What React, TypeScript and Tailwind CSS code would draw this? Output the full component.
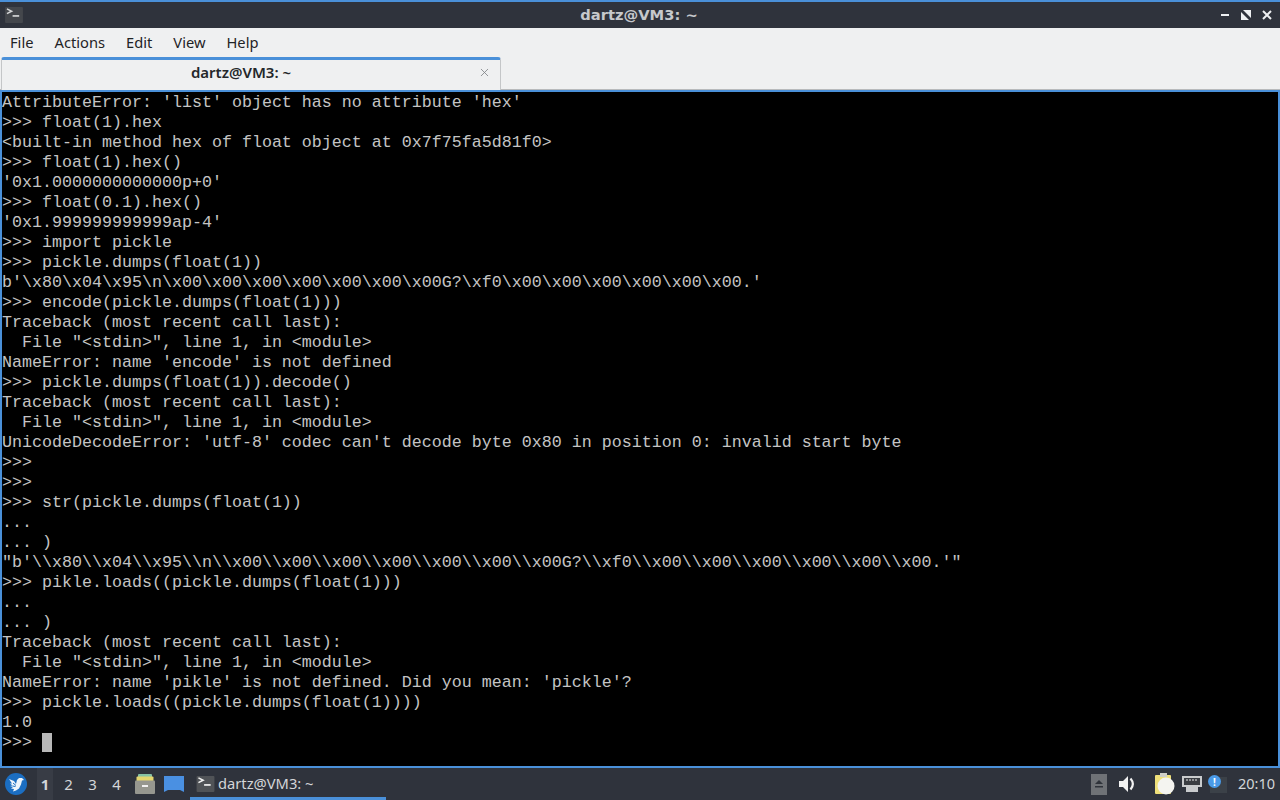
import { X } from "lucide-react";

const LINES = [
  "AttributeError: 'list' object has no attribute 'hex'",
  ">>> float(1).hex",
  "<built-in method hex of float object at 0x7f75fa5d81f0>",
  ">>> float(1).hex()",
  "'0x1.0000000000000p+0'",
  ">>> float(0.1).hex()",
  "'0x1.999999999999ap-4'",
  ">>> import pickle",
  ">>> pickle.dumps(float(1))",
  "b'\\x80\\x04\\x95\\n\\x00\\x00\\x00\\x00\\x00\\x00\\x00G?\\xf0\\x00\\x00\\x00\\x00\\x00\\x00.'",
  ">>> encode(pickle.dumps(float(1)))",
  "Traceback (most recent call last):",
  '  File "<stdin>", line 1, in <module>',
  "NameError: name 'encode' is not defined",
  ">>> pickle.dumps(float(1)).decode()",
  "Traceback (most recent call last):",
  '  File "<stdin>", line 1, in <module>',
  "UnicodeDecodeError: 'utf-8' codec can't decode byte 0x80 in position 0: invalid start byte",
  ">>> ",
  ">>> ",
  ">>> str(pickle.dumps(float(1))",
  "... ",
  "... )",
  "\"b'\\\\x80\\\\x04\\\\x95\\\\n\\\\x00\\\\x00\\\\x00\\\\x00\\\\x00\\\\x00\\\\x00G?\\\\xf0\\\\x00\\\\x00\\\\x00\\\\x00\\\\x00\\\\x00.'\"",
  ">>> pikle.loads((pickle.dumps(float(1)))",
  "... ",
  "... )",
  "Traceback (most recent call last):",
  '  File "<stdin>", line 1, in <module>',
  "NameError: name 'pikle' is not defined. Did you mean: 'pickle'?",
  ">>> pickle.loads((pickle.dumps(float(1))))",
  "1.0",
];

const MENU = ["File", "Actions", "Edit", "View", "Help"];

function TermIcon({ className, bg, fg }: { className: string; bg: string; fg: string }) {
  return (
    <svg viewBox="0 0 19 17" className={className}>
      <rect width="19" height="17" rx="1" fill={bg} />
      <path d="M2 2l5 2.500L2 7" fill="none" stroke={fg} strokeWidth="1.6" />
      <path d="M8 9.500h7" stroke={fg} strokeWidth="1.8" />
    </svg>
  );
}

function Bird() {
  return (
    <svg viewBox="0 0 22 22" className="h-[22px] w-[22px]">
      <circle cx="11" cy="11" r="11" fill="#1b6ec2" />
      <path
        d="M4 6l5 2 2 3 1-4 2-2 3 0 2 2-2 .5-1 4-2 4-3 2-3 1 1-2.500-3-.5 2-1.500-3-1 2.500-.5-2.500-2 2 0z"
        fill="#eef5fb"
      />
      <path d="M8 10l3 2.500M7.500 13l3 .5" stroke="#1b6ec2" strokeWidth="1" />
    </svg>
  );
}

function FilesIcon() {
  return (
    <svg viewBox="0 0 20 20" className="h-[20px] w-[20px]">
      <rect x="3" y="0" width="14" height="4" rx="1" fill="#86c2a4" />
      <rect x="1.500" y="2.500" width="17" height="5" rx="1" fill="#e4d56e" />
      <rect x="0" y="6.500" width="20" height="13.500" rx="1" fill="#96978f" />
      <rect x="7" y="11" width="6" height="2" fill="#f0f0f0" />
    </svg>
  );
}

function DesktopIcon() {
  return (
    <svg viewBox="0 0 20 16" className="h-[16px] w-[20px]">
      <path d="M0 0h20v16l-4-2H4l-4 2z" fill="#4a90e2" />
    </svg>
  );
}

function Tray() {
  return (
    <div className="flex items-center">
      <div className="flex h-[21px] w-[16px] items-center justify-center bg-[#6f7276]">
        <svg viewBox="0 0 10 8" className="h-[8px] w-[10px]">
          <path d="M5 0l4 4H1z M1 6h8v1.500H1z" fill="#2f333a" />
        </svg>
      </div>
      <svg viewBox="0 0 17 16" className="ml-[12px] h-[16px] w-[17px]">
        <path d="M0 5h4l5-5v16l-5-5H0z" fill="#f2f2f2" />
        <path d="M11.500 2.500c3 3.500 3 7.500 0 11" fill="none" stroke="#f2f2f2" strokeWidth="2.200" />
      </svg>
      <svg viewBox="0 0 20 22" className="ml-[19px] h-[22px] w-[20px]">
        <rect x="0" y="2" width="16" height="19" rx="1" fill="#efe07a" />
        <rect x="5" y="0" width="7" height="4" fill="#cfcfc8" />
        <circle cx="11" cy="13" r="8.500" fill="#f4f4f0" />
      </svg>
      <svg viewBox="0 0 20 16" className="ml-[7px] h-[16px] w-[20px]">
        <path d="M0 0h20v11h-4v5H4v-5H0z" fill="#c9cbcd" />
        <rect x="2" y="2" width="16" height="7" fill="#3a3d42" />
        <path d="M5 3v2M8 3v2M11 3v2M14 3v2" stroke="#e8e8e8" strokeWidth="1" />
      </svg>
      <div className="relative ml-[6px] h-[18px] w-[19px]">
        <div className="absolute left-[2px] top-[2px] h-[16px] w-[17px] bg-[#3b4148]" />
        <div className="absolute left-0 top-0 flex h-[13px] w-[13px] items-center justify-center rounded-full bg-[#4a9ae8] text-[10px] font-bold leading-none text-white">
          !
        </div>
      </div>
    </div>
  );
}

export default function App() {
  return (
    <div className="flex h-[800px] w-[1280px] flex-col overflow-hidden bg-[#eff0f1] font-['Noto_Sans',sans-serif]">
      <div className="grid h-[28px] shrink-0 grid-cols-[1fr_auto_1fr] items-center border-t-2 border-[#4a90d9] bg-[#2f333c] pl-[5px] pr-[7px]">
        <TermIcon className="h-[16px] w-[18px]" bg="#44474c" fg="#d4d5d6" />
        <div className="font-['DejaVu_Sans',sans-serif] text-[14.7px] font-bold leading-none text-[#c6c9cc]">dartz@VM3: ~</div>
        <div className="flex items-center justify-end gap-[9px]">
          <svg viewBox="0 0 12 12" className="h-[12px] w-[12px]">
            <path d="M2 6h8" stroke="#eef0f2" strokeWidth="2" />
          </svg>
          <svg viewBox="0 0 12 12" className="h-[12px] w-[12px]">
            <path d="M1 3v8h8z M11 9V1H3z" fill="#eef0f2" />
          </svg>
          <svg viewBox="0 0 12 12" className="h-[12px] w-[12px]">
            <path d="M2 2l8 8M10 2l-8 8" stroke="#eef0f2" strokeWidth="2" />
          </svg>
        </div>
      </div>

      <div className="flex h-[29px] shrink-0 items-center gap-[21px] pb-[1px] pl-[10px] text-[14.7px] text-[#1f2326]">
        {MENU.map((m) => (
          <span key={m}>{m}</span>
        ))}
      </div>

      <div className="flex h-[33px] shrink-0 items-end border-b border-[#b8babc]">
        <div className="-mb-px ml-[1px] flex h-[33px] w-[500px] items-center rounded-t-[3px] border-x border-[#c4c6c8] border-t-[3px] border-t-[#4a90d9] bg-[#eff0f1] pb-[6px] pr-[9px]">
          <div className="flex-1 pl-[2px] text-center text-[15px] font-semibold text-[#24272a]">dartz@VM3: ~</div>
          <X className="h-[13px] w-[13px] text-[#7d8084]" strokeWidth={1.5} />
        </div>
      </div>

      <div className="min-h-0 flex-1 border-2 border-[#4a90d9] bg-black pt-[1px] font-['Liberation_Mono',monospace] text-[16.67px] leading-[20px] text-[#c4c4c4]">
        {LINES.map((l, i) => (
          <div key={i} className="h-[20px] whitespace-pre">
            {l}
          </div>
        ))}
        <div className="flex h-[20px] whitespace-pre">
          {">>> "}
          <span className="h-[19px] w-[10px] bg-[#b8b8b8]" />
        </div>
      </div>

      <div className="flex h-[32px] shrink-0 items-center bg-[#2f333c] text-[#d4d6d8]">
        <div className="ml-[5px]">
          <Bird />
        </div>
        <div className="ml-[10px] flex h-[32px] w-[16px] items-center justify-center bg-[#383c45] text-[15px] font-bold">1</div>
        <span className="ml-[7px] w-[17px] text-center text-[15px]">2</span>
        <span className="ml-[7px] w-[17px] text-center text-[15px]">3</span>
        <span className="ml-[7px] w-[17px] text-center text-[15px]">4</span>
        <div className="ml-[10px]">
          <FilesIcon />
        </div>
        <div className="ml-[9px]">
          <DesktopIcon />
        </div>
        <div className="ml-[6px] flex h-[32px] w-[196px] items-center border-b-[3px] border-b-[#4a90d9] pl-[6px] pt-[2px] text-[14.7px]">
          <TermIcon className="h-[16px] w-[19px]" bg="#505357" fg="#f2f2f2" />
          <span className="ml-[3px]">dartz@VM3: ~</span>
        </div>
        <div className="ml-auto flex items-center">
          <Tray />
          <span className="ml-[11px] mr-[5px] text-[14.5px]">20:10</span>
        </div>
      </div>
    </div>
  );
}
